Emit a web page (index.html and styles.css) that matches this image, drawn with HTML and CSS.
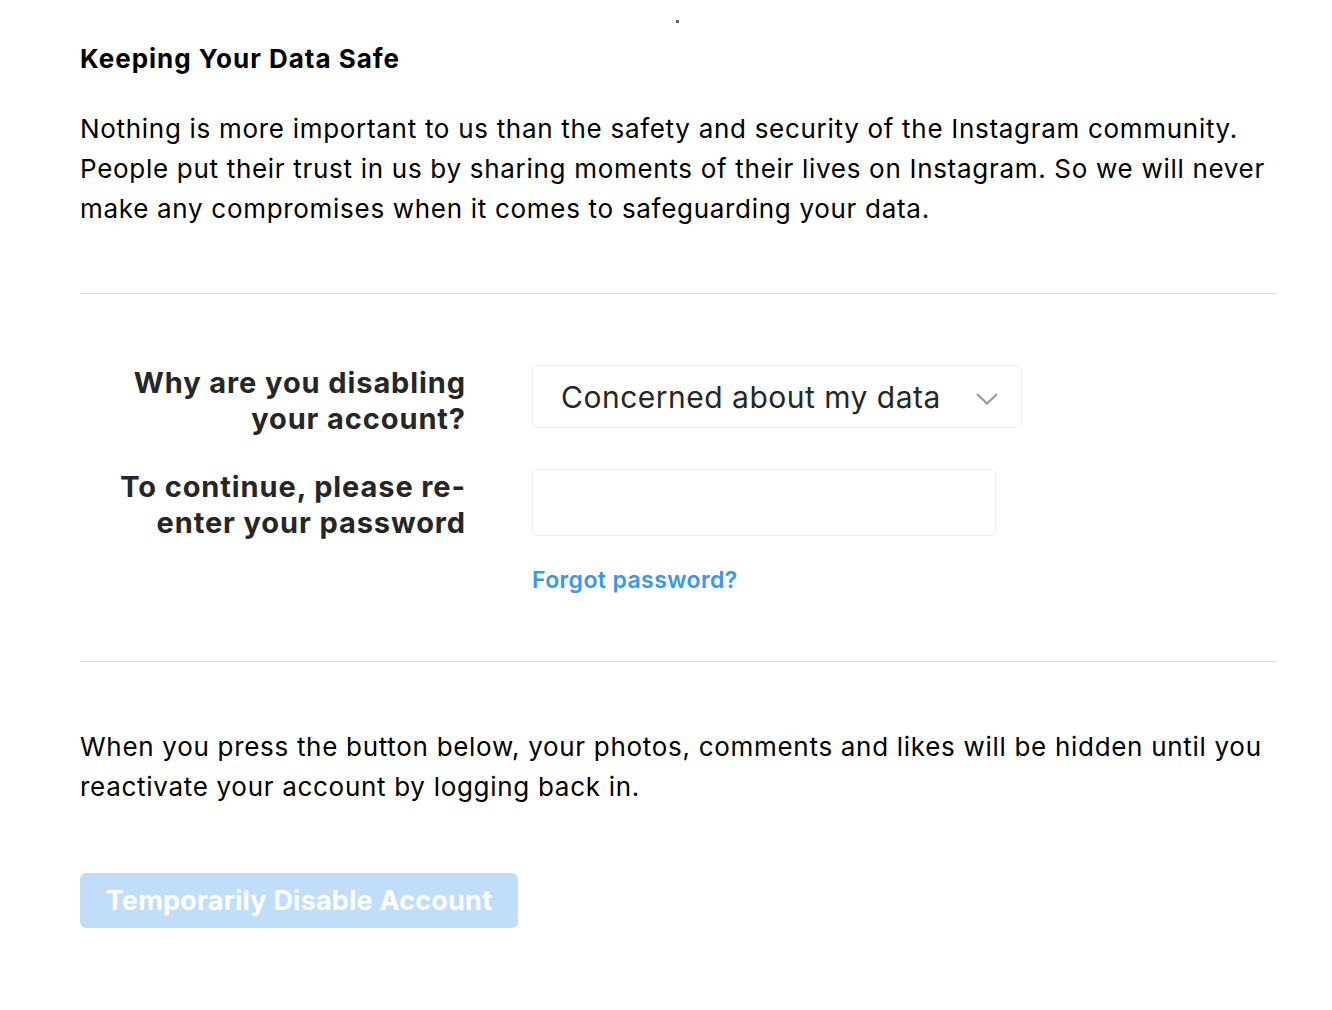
FILE: index.html
```html
<html lang="en">
<head>
    <meta charset="UTF-8">
    <meta name="viewport" content="width=device-width, initial-scale=1.0">
    <title>Temporarily Disable Account</title>

    <link rel="stylesheet" href="styles.css">
</head>
<body>
    <div class='dot'></div>
    <main class='page'>
        <h2 class='title'>Keeping Your Data Safe</h2>
        <p class='text'>Nothing is more important to us than the safety and security of the Instagram community. People put their trust in us by sharing moments of their lives on Instagram. So we will never make any compromises when it comes to safeguarding your data.</p>

        <hr class='line line-top'>

        <form class='form'>
            <label class='label' for='reason'>Why are you disabling your account?</label>
            <div class='field'>
                <div class='select'>
                    <span>Concerned about my data</span>
                    <svg width="24" height="14" viewBox="0 0 24 14">
                        <path d="M2 2 L12 11.5 L22 2" fill="none" stroke="#9a9a9a" stroke-width="2.2"/>
                    </svg>
                </div>
            </div>

            <label class='label' for='pass'>To continue, please re-enter your password</label>
            <div class='field'>
                <input class='input' id='pass' type='password'>
                <a class='forgot' href='#'>Forgot password?</a>
            </div>
        </form>

        <hr class='line line-bottom'>

        <p class='text text-end'>When you press the button below, your photos, comments and likes will be hidden until you reactivate your account by logging back in.</p>

        <button class='btn' type='button' disabled>Temporarily Disable Account</button>
    </main>
</body>
</html>
```

FILE: styles.css
```css
body{
    margin: 0;
    background: #fff;
    font-family: Inter, 'Noto Sans', sans-serif;
    color: #000;
}
.dot{
    width: 3px;
    height: 3px;
    margin: 20px 0 0 676px;
    background: #666;
}
.page{
    padding: 0 55px 80px 80px;
}
.title{
    margin: 21px 0 0;
    font-size: 26px;
    line-height: 30px;
    font-weight: 700;
    letter-spacing: 1px;
}
.text{
    margin: 35px 0 0;
    font-size: 26px;
    line-height: 40px;
    font-weight: 400;
    letter-spacing: 0.7px;
}
.line{
    border: 0;
    height: 1px;
    background: #dbdbdb;
    margin: 0;
}
.line-top{
    margin-top: 64px;
}
.form{
    display: grid;
    grid-template-columns: 386px 1fr;
    column-gap: 66px;
    row-gap: 32px;
    margin: 71px 0 0;
}
.label{
    text-align: right;
    font-size: 29px;
    line-height: 36px;
    font-weight: 700;
    letter-spacing: 0.9px;
    color: #262626;
}
.field{
    display: flex;
    flex-direction: column;
    align-items: flex-start;
}
.select{
    box-sizing: border-box;
    width: 490px;
    height: 63px;
    border: 1px solid #efefef;
    border-radius: 6px;
    padding: 0 22px 0 28px;
    display: flex;
    align-items: center;
    justify-content: space-between;
    font-size: 30px;
    letter-spacing: 0.5px;
    color: #262626;
}
.select svg{
    margin-top: 4px;
}
.input{
    box-sizing: border-box;
    width: 464px;
    height: 67px;
    border: 1px solid #efefef;
    border-radius: 6px;
    background: #fff;
    outline: none;
}
.forgot{
    margin-top: 29px;
    font-size: 23px;
    line-height: 30px;
    font-weight: 600;
    letter-spacing: 0.4px;
    color: #3897f0;
    text-decoration: none;
}
.line-bottom{
    margin-top: 66px;
}
.text-end{
    margin-top: 65px;
}
.btn{
    margin-top: 66px;
    width: 438px;
    height: 55px;
    border: 0;
    border-radius: 6px;
    background: #c1ddf9;
    color: #fff;
    font-family: Inter, 'Noto Sans', sans-serif;
    font-size: 27px;
    font-weight: 700;
    letter-spacing: 0.2px;
    padding: 0;
}
```
